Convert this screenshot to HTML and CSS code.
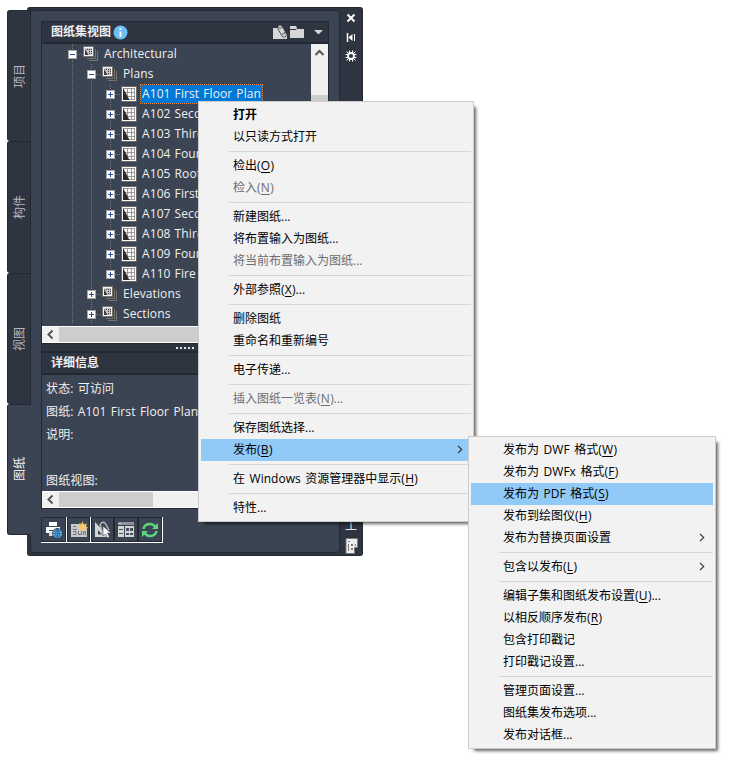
FILE: index.html
```
<!DOCTYPE html>
<html lang="zh-CN">
<head>
    <meta charset="UTF-8">
    <title>图纸集视图</title>
    <link rel="stylesheet" href="styles.css">
</head>
<body>

    <!-- shared icons -->
    <svg class="defs" width="0" height="0">
        <symbol id="sheet" viewBox="0 0 16 16">
            <rect x=".5" y=".5" width="15" height="15" fill="#fafafa" stroke="#6c6a66"/>
            <path d="M2 2.500h12M2 6.500h12M4 10.500h10M8 13.500h6M6.500 2v11M10.500 2v12M13.500 2v12" fill="none" stroke="#999"/>
            <path d="M2 2l6.500 12H2z" fill="#2b2b2b"/>
        </symbol>
        <symbol id="subset" viewBox="0 0 16 16">
            <path d="M12.500 3v9.500H4M14.500 5v9.500H6" fill="none" stroke="#77746f"/>
            <rect x=".5" y=".5" width="10" height="10" fill="#f4f4f4" stroke="#77746f"/>
            <path d="M2 2h7v7H2z" fill="#c4c4c4"/>
            <path d="M2 3l3.500 6H2zM4 3h1v1H4zM6 3h1v1H6zM8 3h1v1H8zM6 5h1v1H6zM8 5h1v1H8zM6 7h1v1H6zM8 7h1v1H8z" fill="#3b3b3b"/>
        </symbol>
        <symbol id="plus" viewBox="0 0 9 9">
            <rect x=".5" y=".5" width="8" height="8" fill="#fff" stroke="#a5a5a5"/>
            <path d="M2 4.500h5M4.500 2v5" stroke="#2a4b9b"/>
        </symbol>
        <symbol id="minus" viewBox="0 0 9 9">
            <rect x=".5" y=".5" width="8" height="8" fill="#fff" stroke="#a5a5a5"/>
            <path d="M2 4.500h5" stroke="#2a4b9b"/>
        </symbol>
        <symbol id="arrow" viewBox="0 0 6 9">
            <path d="M1 .8l3.700 3.700L1 8.200" fill="none" stroke="#333" stroke-width="1.200"/>
        </symbol>
        <symbol id="scroll-left" viewBox="0 0 17 17">
            <path d="M10.500 4.500l-4 4 4 4" fill="none" stroke="#555" stroke-width="2"/>
        </symbol>
    </svg>

    <div class="window">
        <div class="tabs">
            <div class="tab"><span>项目</span></div>
            <div class="tab"><span>构件</span></div>
            <div class="tab"><span>视图</span></div>
            <div class="tab active"><span>图纸</span></div>
        </div>

        <div class="palette">
            <div class="panel">
                <div class="view">
                    <div class="header">
                        <b>图纸集视图</b>
                        <svg class="info" width="15" height="15" viewBox="0 0 15 15">
                            <circle cx="7.500" cy="7.500" r="7" fill="#6dbdf7"/>
                            <path d="M6.500 3h2v2h-2zM6.500 6.500h2V12h-2z" fill="#fff"/>
                        </svg>
                        <svg class="tools" width="50" height="16" viewBox="0 0 50 16">
                            <path d="M0 4h5l9 6v5H0z" fill="#d6d6d6"/>
                            <path d="M5 2q2-2 4 0l4 7q1 3-1 4t-3-1L5 5z" fill="#d6d6d6" stroke="#2e3440" stroke-width=".8"/>
                            <path d="M6 4q2 1 3-1M9 10q2 1 3-2" fill="none" stroke="#2e3440" stroke-width=".8"/>
                            <path d="M17 2h6l1 2h7v10H17z" fill="#d6d6d6"/>
                            <path d="M17 5.500h6l1-1h7" fill="none" stroke="#2e3440"/>
                            <path d="M41 6h9l-4.500 4.500z" fill="#d6d6d6"/>
                        </svg>
                    </div>

                    <div class="tree-area">
                        <div class="tree">
                            <div class="row first"><i class="node"><svg><use href="#minus"/></svg></i><svg class="icon"><use href="#subset"/></svg><span>Architectural</span></div>
                            <div class="row"><i></i><i class="node"><svg><use href="#minus"/></svg></i><svg class="icon"><use href="#subset"/></svg><span>Plans</span></div>
                            <div class="row"><i></i><i></i><i class="node"><svg><use href="#plus"/></svg></i><svg class="icon"><use href="#sheet"/></svg><span class="selected">A101 First Floor Plan</span></div>
                            <div class="row"><i></i><i></i><i class="node"><svg><use href="#plus"/></svg></i><svg class="icon"><use href="#sheet"/></svg><span>A102 Second Floor Plan</span></div>
                            <div class="row"><i></i><i></i><i class="node"><svg><use href="#plus"/></svg></i><svg class="icon"><use href="#sheet"/></svg><span>A103 Third Floor Plan</span></div>
                            <div class="row"><i></i><i></i><i class="node"><svg><use href="#plus"/></svg></i><svg class="icon"><use href="#sheet"/></svg><span>A104 Fourth Floor Plan</span></div>
                            <div class="row"><i></i><i></i><i class="node"><svg><use href="#plus"/></svg></i><svg class="icon"><use href="#sheet"/></svg><span>A105 Roof Plan</span></div>
                            <div class="row"><i></i><i></i><i class="node"><svg><use href="#plus"/></svg></i><svg class="icon"><use href="#sheet"/></svg><span>A106 First Floor</span></div>
                            <div class="row"><i></i><i></i><i class="node"><svg><use href="#plus"/></svg></i><svg class="icon"><use href="#sheet"/></svg><span>A107 Second Floor</span></div>
                            <div class="row"><i></i><i></i><i class="node"><svg><use href="#plus"/></svg></i><svg class="icon"><use href="#sheet"/></svg><span>A108 Third Floor</span></div>
                            <div class="row"><i></i><i></i><i class="node"><svg><use href="#plus"/></svg></i><svg class="icon"><use href="#sheet"/></svg><span>A109 Fourth Floor</span></div>
                            <div class="row last"><i></i><i></i><i class="node"><svg><use href="#plus"/></svg></i><svg class="icon"><use href="#sheet"/></svg><span>A110 Fire Plan</span></div>
                            <div class="row"><i></i><i class="node"><svg><use href="#plus"/></svg></i><svg class="icon"><use href="#subset"/></svg><span>Elevations</span></div>
                            <div class="row"><i></i><i class="node"><svg><use href="#plus"/></svg></i><svg class="icon"><use href="#subset"/></svg><span>Sections</span></div>
                        </div>
                        <div class="vscroll">
                            <svg width="17" height="17" viewBox="0 0 17 17"><path d="M4.500 11l4-4 4 4" fill="none" stroke="#555" stroke-width="2"/></svg>
                            <div class="thumb"></div>
                        </div>
                    </div>
                    <div class="hscroll">
                        <svg width="17" height="17"><use href="#scroll-left"/></svg>
                        <div class="thumb"></div>
                    </div>

                    <div class="splitter"><i></i><i></i><i></i><i></i><i></i></div>

                    <div class="header"><b>详细信息</b></div>
                    <div class="details">
                        <p>状态: 可访问</p>
                        <p>图纸: A101 First Floor Plan</p>
                        <p>说明:</p>
                        <p></p>
                        <p>图纸视图:</p>
                    </div>
                    <div class="hscroll short">
                        <svg width="17" height="17"><use href="#scroll-left"/></svg>
                        <div class="thumb"></div>
                    </div>
                </div>

                <div class="toolbar">
                    <div class="group">
                        <button>
                            <svg width="18" height="18" viewBox="0 0 18 18">
                                <path d="M4 1h8v4H4zM1 6h14v6H1z" fill="#fff"/>
                                <path d="M11 7h2v1h-2zM4 9h8v1H4z" fill="#3b4453"/>
                                <path d="M4 11h5v4H4z" fill="#ddd"/>
                                <circle cx="12.500" cy="12.500" r="5" fill="#5fb4f2" stroke="#2e3440" stroke-width=".8"/>
                                <path d="M8 12.500h9M12.500 8v9M9 10h7M9 15h7M12.500 8q-4 4.500 0 9M12.500 8q4 4.500 0 9" fill="none" stroke="#285a88" stroke-width=".7"/>
                            </svg>
                        </button>
                    </div>
                    <div class="group">
                        <button>
                            <svg width="18" height="18" viewBox="0 0 18 18">
                                <path d="M1 3h9v4h7v9H1z" fill="#c9c9c9"/>
                                <path d="M3 5.500h3M3 8.500h4M3 10.500h3M3 13.500h3v-3M8.500 10v3.500h3V10M13.500 14v-3.500h2V14M3.500 10v1" fill="none" stroke="#707681"/>
                                <path d="M12.500 0l1.300 3.400L17 2.500l-1 2.800 2 1.200-2.700 1 .5 2.500-2.300-1.500-1 2.500-1-2.700-3 .7 1.500-2.500L7.500 5l3-.5L9 2l2.500 1z" fill="#f8c96b"/>
                            </svg>
                        </button>
                    </div>
                    <div class="group">
                        <button>
                            <svg width="18" height="18" viewBox="0 0 18 18">
                                <path d="M1 1l14 15H1z" fill="#d6d6d6"/>
                                <path d="M4 9l4 4.500H4z" fill="#3b4453"/>
                                <path d="M6 4q2-4 5-2l4 7M6 3l3 12" fill="none" stroke="#b4b8be" stroke-width="1.500"/>
                                <path d="M9 5v10l2.500-2 2 4 2-1-2-4H17z" fill="#fff" stroke="#3b4453" stroke-width=".6"/>
                            </svg>
                        </button>
                        <button>
                            <svg width="18" height="18" viewBox="0 0 18 18">
                                <path d="M1 1h16v3H1z" fill="#8e929a"/>
                                <path d="M2 2h2v1H2zM1 5h6v11H1zM8 5h9v11H8z" fill="#d6d6d6"/>
                                <path d="M2 8h4v1H2zM2 12h4v1H2zM9 7h3v3H9zM13 7h3v3h-3zM9 12h3v2H9zM13 12h3v2h-3z" fill="#464e5c"/>
                            </svg>
                        </button>
                        <button>
                            <svg width="18" height="18" viewBox="0 0 18 18">
                                <path d="M2.500 8q1-5 6.500-5 3.500 0 5.500 3M15.500 10q-1 5-6.500 5-3.500 0-5.500-3" fill="none" stroke="#5ad67d" stroke-width="2.400"/>
                                <path d="M17 2v6h-6zM1 16v-6h6z" fill="#5ad67d"/>
                            </svg>
                        </button>
                    </div>
                </div>
            </div>

            <div class="titlebar">
                <svg width="12" height="52" viewBox="0 0 12 52">
                    <path d="M2.500 2.500l7 7M9.500 2.500l-7 7" stroke="#fff" stroke-width="2"/>
                    <path d="M2.500 21v9" stroke="#fff" stroke-width="1.500"/>
                    <path d="M7.500 22v7L3.500 25.500z" fill="#fff"/>
                    <path d="M9.500 22v7" stroke="#fff"/>
                    <circle cx="6" cy="44" r="3" fill="none" stroke="#fff" stroke-width="1.800"/>
                    <path d="M4.500 38.500v3M7.500 38.500v3M4.500 46.500v3M7.500 46.500v3M.5 42.500h3M.5 45.500h3M8.500 42.500h3M8.500 45.500h3M1.500 39.500l2 2M10.500 39.500l-2 2M1.500 48.500l2-2M10.500 48.500l-2-2" stroke="#fff"/>
                </svg>
                <span>工</span>
                <svg width="13" height="16" viewBox="0 0 13 16">
                    <path d="M1 .5h11.500v9h-3v6H1z" fill="#eee" stroke="#777"/>
                    <path d="M3 3h2v1H3zM3 6h1v7H3zM6 6h2v2H6zM6 10h2v2H6zM10 6h1v2h-1z" fill="#777"/>
                </svg>
            </div>
        </div>
    </div>

    <div class="menu context-menu">
        <div class="item"><b>打开</b></div>
        <div class="item">以只读方式打开</div>
        <hr>
        <div class="item">检出(<u>O</u>)</div>
        <div class="item disabled">检入(<u>N</u>)</div>
        <hr>
        <div class="item">新建图纸...</div>
        <div class="item">将布置输入为图纸...</div>
        <div class="item disabled">将当前布置输入为图纸...</div>
        <hr>
        <div class="item">外部参照(<u>X</u>)...</div>
        <hr>
        <div class="item">删除图纸</div>
        <div class="item">重命名和重新编号</div>
        <hr>
        <div class="item">电子传递...</div>
        <hr>
        <div class="item disabled">插入图纸一览表(<u>N</u>)...</div>
        <hr>
        <div class="item">保存图纸选择...</div>
        <div class="item hover">发布(<u>B</u>)<svg><use href="#arrow"/></svg></div>
        <hr>
        <div class="item">在 Windows 资源管理器中显示(<u>H</u>)</div>
        <hr>
        <div class="item">特性...</div>
    </div>

    <div class="menu submenu">
        <div class="item">发布为 DWF 格式(<u>W</u>)</div>
        <div class="item">发布为 DWFx 格式(<u>F</u>)</div>
        <div class="item hover">发布为 PDF 格式(<u>S</u>)</div>
        <div class="item">发布到绘图仪(<u>H</u>)</div>
        <div class="item">发布为替换页面设置<svg><use href="#arrow"/></svg></div>
        <hr>
        <div class="item">包含以发布(<u>L</u>)<svg><use href="#arrow"/></svg></div>
        <hr>
        <div class="item">编辑子集和图纸发布设置(<u>U</u>)...</div>
        <div class="item">以相反顺序发布(<u>R</u>)</div>
        <div class="item">包含打印戳记</div>
        <div class="item">打印戳记设置...</div>
        <hr>
        <div class="item">管理页面设置...</div>
        <div class="item">图纸集发布选项...</div>
        <div class="item">发布对话框...</div>
    </div>

</body>
</html>
```
FILE: styles.css
```
/* General Styles */
* {
    box-sizing: border-box;
}

body {
    font-family: "Open Sans", "Noto Sans CJK SC", sans-serif;
    font-size: 12px;
    margin: 0;
    height: 764px;
    position: relative;
    overflow: hidden;
    background-color: #fff;
}

svg {
    display: block;
    flex: none;
}

.defs {
    position: absolute;
}

.window {
    display: flex;
    align-items: flex-start;
    padding: 7px;
}

/* Side tabs */
.tabs {
    position: relative;
    z-index: 1;
    width: 24px;
    margin: 3px -4px 0 0;
}

.tab {
    display: flex;
    align-items: center;
    justify-content: center;
    height: 131.250px;
    background-color: #2e3440;
    border: 1px solid #222933;
    border-bottom: 0;
    border-radius: 3px 0 0 3px;
    color: #b4b8be;
}

.tab span {
    writing-mode: vertical-rl;
    text-orientation: sideways;
    transform: rotate(180deg);
    line-height: 16px;
    margin-right: -1px;
}

.tab.active {
    background-color: #3b4453;
    border-right: 0;
    border-bottom: 1px solid #222933;
    color: #f0f0f0;
}

/* Palette */
.palette {
    display: flex;
    width: 336px;
    height: 549px;
    padding: 2px 0 2px 3px;
    background-color: #2e3440;
    border: 1px solid #222933;
    border-left: 0;
    border-radius: 3px;
}

.panel {
    width: 310px;
    padding: 10px 9px 0 10px;
    background-color: #3b4453;
    border: 1px solid #222933;
    border-radius: 4px;
}

.view {
    height: 488px;
    border: 1px solid #222933;
    width: 288px;
    display: flex;
    flex-direction: column;
    color: #f0f0f0;
}

.header {
    display: flex;
    align-items: center;
    flex: none;
    height: 22px;
    padding-left: 9px;
    background-color: #2e3440;
    border-bottom: 2px solid #222933;
}

.header b {
    margin-top: -2px;
}

.info {
    margin: 1px 0 0 2px;
}

.tools {
    margin-left: auto;
    margin-right: 5px;
}

/* Tree */
.tree-area {
    display: flex;
    flex: none;
    height: 282px;
}

.tree {
    flex: 1;
    padding-left: 21px;
    overflow: hidden;
}

.row {
    display: flex;
    align-items: center;
    height: 20px;
    white-space: nowrap;
}

.row i {
    width: 19px;
    height: 20px;
    padding: 6px 5px 0;
    background: repeating-linear-gradient(#77746f 0 1px, transparent 1px 2px) 9px 0 / 1px 20px no-repeat;
}

.row .node {
    background: repeating-linear-gradient(#77746f 0 1px, transparent 1px 2px) 9px 0 / 1px 20px no-repeat,
        repeating-linear-gradient(90deg, #77746f 0 1px, transparent 1px 2px) 14px 10px / 5px 1px no-repeat;
}

.row.last .node {
    background-size: 1px 10px, 5px 1px;
}

.node svg {
    width: 9px;
    height: 9px;
}

.icon {
    width: 16px;
    height: 16px;
    margin: 0 4px 0 1px;
}

.row span {
    line-height: 18px;
    padding: 0 1px;
    letter-spacing: 0.1px;
    word-spacing: 0.8px;
}

.row .selected {
    background-color: #0078d7;
    outline: 1px dotted #ff8728;
}

/* Scrollbars */
.vscroll {
    width: 17px;
    background-color: #f0f0f0;
}

.vscroll .thumb {
    height: 180px;
    margin-top: 34px;
    background-color: #cdcdcd;
}

.hscroll {
    display: flex;
    flex: none;
    height: 17px;
    background-color: #f0f0f0;
    border-top: 1px solid #fff;
    border-bottom: 1px solid #fff;
}

.hscroll svg {
    margin-top: -1px;
}

.hscroll .thumb {
    width: 236px;
    background-color: #cdcdcd;
}

.hscroll.short .thumb {
    width: 94px;
}

.splitter {
    display: flex;
    flex: none;
    justify-content: center;
    gap: 2px;
    height: 10px;
    padding: 3px 1px 0 0;
    background-color: #2e3440;
    border-top: 1px solid #222933;
    border-bottom: 2px solid #222933;
}

.splitter i {
    width: 2px;
    height: 2px;
    background-color: #e4e4e4;
}

/* Details */
.details {
    flex: 1;
    padding: 2px 4px 0;
    overflow: hidden;
    word-spacing: 1px;
}

.details p {
    height: 23px;
    line-height: 23px;
    margin: 0;
    letter-spacing: 0.14px;
}

/* Toolbar */
.toolbar {
    display: flex;
    margin-top: 8px;
}

.group {
    display: flex;
    border-right: 1px solid #fff;
    border-bottom: 1px solid #fff;
}

button {
    display: flex;
    align-items: center;
    justify-content: center;
    width: 24px;
    height: 25px;
    padding: 0;
    background-color: #3b4453;
    border: 1px solid #222933;
}

.group:first-child button {
    width: 25px;
}

.group:nth-child(2) button,
.group:nth-child(3) button:first-child {
    width: 23px;
}

.titlebar {
    display: flex;
    flex-direction: column;
    align-items: center;
    flex: 1;
    padding: 2px 0 0;
    color: #e6e6e6;
}

.titlebar span {
    margin-top: auto;
    margin-bottom: 4px;
    line-height: 16px;
}

.titlebar svg:last-child {
    margin-bottom: -1px;
}

/* Menus */
.menu {
    position: absolute;
    padding: 2px;
    background-color: #f2f2f2;
    border: 1px solid #ccc;
    box-shadow: 4px 4px 3px -2px rgba(0, 0, 0, 0.6);
    color: #000;
    word-spacing: 1.5px;
}

.context-menu {
    left: 198px;
    top: 101px;
    width: 276px;
}

.submenu {
    left: 468px;
    top: 436px;
    width: 248px;
}

.item {
    display: flex;
    align-items: center;
    height: 22px;
    padding: 0 0 2px 32px;
    white-space: pre;
}

.item svg {
    width: 6px;
    height: 9px;
    margin-left: auto;
    margin-right: 8px;
}

.item u {
    text-underline-offset: 2px;
    padding: 0 0.3px;
}

.item.hover {
    background-color: #91c9f7;
}

.item.disabled {
    color: #6d6d6d;
}

.menu hr {
    height: 1px;
    margin: 3px 0 3px 28px;
    border: 0;
    background-color: #d7d7d7;
}
```
